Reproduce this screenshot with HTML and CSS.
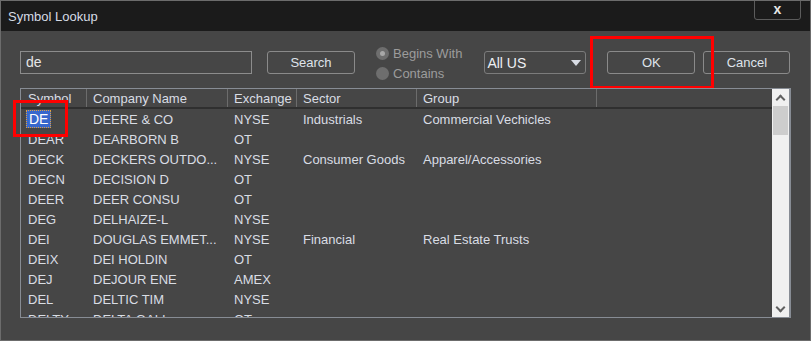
FILE: index.html
```html
<!DOCTYPE html>
<html lang="en">
<head>
    <meta charset="UTF-8">
    <title>Symbol Lookup</title>
    <link rel="stylesheet" href="styles.css">
</head>
<body>
    <div class="window">
        <div class="titlebar">
            <span class="title">Symbol Lookup</span>
            <div class="close">x</div>
        </div>

        <div class="content">
            <div class="toolbar">
                <input type="text" class="search-box" value="de">
                <button class="btn search-btn">Search</button>
                <div class="radios">
                    <label class="radio"><span class="dot checked"></span>Begins With</label>
                    <label class="radio"><span class="dot"></span>Contains</label>
                </div>
                <div class="dropdown">
                    <span>All US</span>
                    <span class="arrow"></span>
                </div>
                <div class="ok-wrap">
                    <button class="btn ok-btn">OK</button>
                    <div class="mark mark-ok"></div>
                </div>
                <button class="btn cancel-btn">Cancel</button>
            </div>

            <div class="table">
                <div class="grid">
                    <div class="row head">
                        <div>Symbol</div>
                        <div>Company Name</div>
                        <div>Exchange</div>
                        <div>Sector</div>
                        <div>Group</div>
                        <div></div>
                    </div>
                    <div class="rows" id="rows"></div>
                </div>
                <div class="scrollbar">
                    <div class="sb-arrow up"></div>
                    <div class="sb-thumb"></div>
                    <div class="sb-track"></div>
                    <div class="sb-arrow down"></div>
                </div>
                <div class="mark mark-sym"></div>
            </div>
        </div>
    </div>

    <script>
        // symbol, company, exchange, sector, group
        const data = [
            ["DE", "DEERE & CO", "NYSE", "Industrials", "Commercial Vechicles"],
            ["DEAR", "DEARBORN B", "OT", "", ""],
            ["DECK", "DECKERS OUTDO...", "NYSE", "Consumer Goods", "Apparel/Accessories"],
            ["DECN", "DECISION D", "OT", "", ""],
            ["DEER", "DEER CONSU", "OT", "", ""],
            ["DEG", "DELHAIZE-L", "NYSE", "", ""],
            ["DEI", "DOUGLAS EMMET...", "NYSE", "Financial", "Real Estate Trusts"],
            ["DEIX", "DEI HOLDIN", "OT", "", ""],
            ["DEJ", "DEJOUR ENE", "AMEX", "", ""],
            ["DEL", "DELTIC TIM", "NYSE", "", ""],
            ["DELTY", "DELTA GALI", "OT", "", ""]
        ];

        const rows = document.getElementById("rows");
        data.forEach(function (d, i) {
            const row = document.createElement("div");
            row.className = "row";
            d.forEach(function (text, j) {
                const cell = document.createElement("div");
                if (i === 0 && j === 0) {
                    cell.innerHTML = '<span class="selected">' + text + '</span>';
                } else {
                    cell.textContent = text;
                }
                row.appendChild(cell);
            });
            row.appendChild(document.createElement("div"));
            rows.appendChild(row);
        });
    </script>
</body>
</html>
```

FILE: styles.css
```css
* {
    box-sizing: border-box;
}
body {
    margin: 0;
    font-family: "Liberation Sans", Arial, sans-serif;
    font-size: 13px;
    color: #d9dde4;
    background: #464646;
}
.window {
    width: 811px;
    height: 341px;
    border: 1px solid #6c6c6c;
    background: #464646;
    display: flex;
    flex-direction: column;
    overflow: hidden;
}
.titlebar {
    height: 30px;
    background: #1b1b1b;
    display: flex;
    align-items: flex-start;
    justify-content: space-between;
}
.title {
    margin: 8px 0 0 7px;
    font-size: 13px;
    color: #d6dce6;
}
.close {
    width: 47px;
    height: 20px;
    margin: -1px 9px 0 0;
    border: 1px solid #5c5c5c;
    border-radius: 0 0 3px 3px;
    text-align: center;
    font-weight: bold;
    font-size: 14px;
    line-height: 17px;
    color: #e6e6e6;
}
.content {
    padding: 20px 0 0 19px;
}
.toolbar {
    display: flex;
    align-items: center;
    height: 23px;
}
.search-box {
    width: 232px;
    height: 23px;
    padding: 0 0 2px 5px;
    background: #464646;
    border: 1px solid #8c8c8c;
    color: #e6e6e6;
    font-family: inherit;
    font-size: 14px;
    outline: none;
}
.btn {
    width: 88px;
    height: 23px;
    background: #464646;
    border: 1px solid #8a8a8a;
    border-radius: 3px;
    color: #dfe3ea;
    font-family: inherit;
    font-size: 13px;
    padding: 0;
}
.search-btn {
    margin-left: 15px;
}
.radios {
    margin-left: 21px;
    display: flex;
    flex-direction: column;
    gap: 4px;
    color: #9c9c9c;
}
.radio {
    display: flex;
    align-items: center;
    height: 16px;
    padding-top: 1px;
}
.dot {
    width: 13px;
    height: 13px;
    border-radius: 50%;
    background: #6e6e6e;
    margin-right: 4px;
    position: relative;
}
.dot.checked::after {
    content: "";
    position: absolute;
    left: 4px;
    top: 4px;
    width: 5px;
    height: 5px;
    border-radius: 50%;
    background: #a8a8a8;
}
.dropdown {
    margin-left: 22px;
    width: 102px;
    height: 23px;
    border: 1px solid #7c7c7c;
    border-radius: 3px;
    display: flex;
    align-items: center;
    justify-content: space-between;
    padding: 0 4px 0 2px;
    font-size: 14px;
    color: #eef0f4;
}
.arrow {
    width: 0;
    height: 0;
    border-left: 5px solid transparent;
    border-right: 5px solid transparent;
    border-top: 6px solid #d8dce4;
}
.ok-wrap {
    position: relative;
    margin-left: 21px;
}
.ok-btn {
    display: block;
}
.cancel-btn {
    margin-left: 8px;
    width: 87px;
}
.mark {
    position: absolute;
    border: 3px solid #ff0000;
    pointer-events: none;
}
.mark-ok {
    left: -17px;
    top: -15px;
    width: 124px;
    height: 53px;
}
.table {
    position: relative;
    margin-top: 14px;
    width: 771px;
    height: 230px;
    border: 1px solid #878c94;
    border-right-width: 2px;
    display: flex;
}
.grid {
    flex: 1;
    overflow: hidden;
}
.row {
    display: grid;
    grid-template-columns: 66px 141px 69px 120px 180px 1fr;
    height: 20px;
    align-items: center;
}
.row > div {
    padding-left: 6px;
    white-space: nowrap;
    overflow: hidden;
}
.row > div:first-child {
    padding-left: 7px;
}
.row.head {
    height: 20px;
    border-bottom: 2px solid #2f2f2f;
    align-items: stretch;
}
.row.head > div {
    border-right: 1px solid #6c6c6c;
    display: flex;
    align-items: center;
}
.row.head > div:last-child {
    border-right: none;
}
.selected {
    display: inline-block;
    margin-left: -2px;
    padding: 0 2px;
    height: 18px;
    line-height: 17px;
    background: #3767cc;
    border: 1px dotted #e0a040;
    color: #ffffff;
    font-size: 14px;
}
.scrollbar {
    width: 17px;
    background: #f0f0f0;
    display: flex;
    flex-direction: column;
}
.sb-arrow {
    height: 17px;
    position: relative;
}
.sb-arrow::after {
    content: "";
    position: absolute;
    left: 5px;
    width: 5px;
    height: 5px;
    border-left: 2px solid #606060;
    border-top: 2px solid #606060;
}
.sb-arrow.up::after {
    top: 7px;
    transform: rotate(45deg);
}
.sb-arrow.down::after {
    top: 4px;
    transform: rotate(-135deg);
}
.sb-thumb {
    height: 29px;
    margin: 0 1px;
    background: #cdcdcd;
}
.sb-track {
    flex: 1;
}
.mark-sym {
    left: -8px;
    top: 11px;
    width: 55px;
    height: 37px;
}
```
